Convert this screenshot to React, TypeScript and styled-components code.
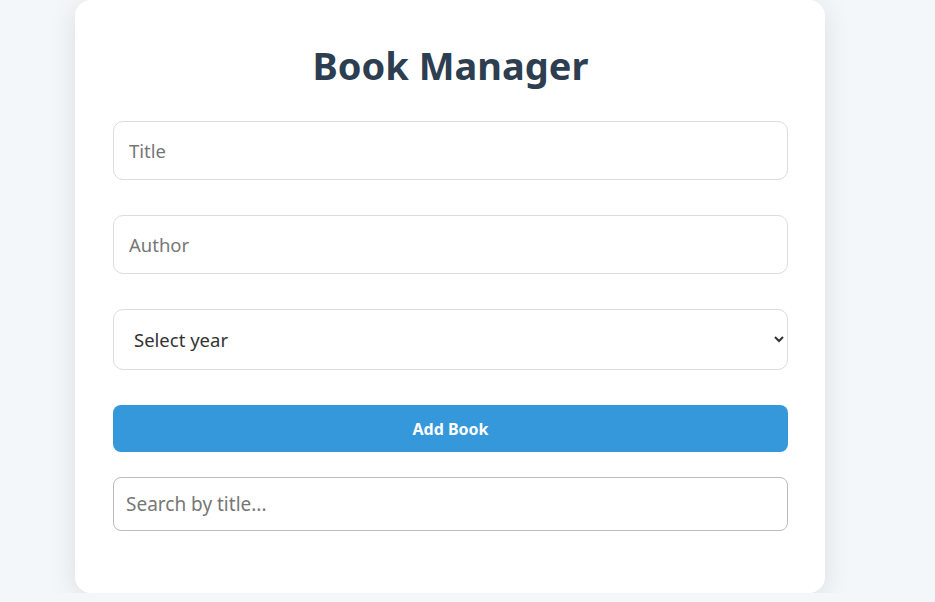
import React from "react";
import styled, { createGlobalStyle } from "styled-components";

const Global = createGlobalStyle`
  html, body { margin: 0; padding: 0; }
  body {
    background: #f4f7fa;
    font-family: "Noto Sans", "Open Sans", sans-serif;
  }
  * { box-sizing: border-box; }
`;

const Page = styled.div`
  display: flex;
  justify-content: flex-start;
  padding-left: 75px;
`;

const Card = styled.div`
  width: 750px;
  background: #fff;
  border-radius: 16px;
  box-shadow: 0 5px 28px rgba(0, 0, 0, 0.1);
  padding: 38px 37px 62px 38px;
  display: flex;
  flex-direction: column;
`;

const Heading = styled.h1`
  margin: 2px 0 31px;
  text-align: center;
  color: #2c3e50;
  font-size: 38px;
  font-weight: 700;
  line-height: 50px;
`;

const Form = styled.form`
  display: flex;
  flex-direction: column;
  gap: 35px;
  margin-bottom: 25px;
`;

const TextInput = styled.input`
  width: 100%;
  height: 59px;
  padding: 0 15px;
  border: 1px solid #ddd;
  border-radius: 10px;
  font-family: inherit;
  font-size: 18.5px;
  color: #333;
  background: #fff;
  outline: none;
  &::placeholder { color: #777; }
`;

const Select = styled.select`
  width: 100%;
  height: 61px;
  padding: 0 16px;
  border: 1px solid #ddd;
  border-radius: 10px;
  font-family: inherit;
  font-size: 18.5px;
  color: #333;
  background: #fff;
  outline: none;
`;

const Button = styled.button`
  width: 100%;
  height: 47px;
  border: none;
  border-radius: 8px;
  background: #3498db;
  color: #fff;
  font-family: inherit;
  font-weight: 700;
  font-size: 16px;
  cursor: pointer;
`;

const Search = styled.input`
  width: 100%;
  height: 54px;
  padding: 0 12px;
  border: 1px solid #bbb;
  border-radius: 8px;
  font-family: inherit;
  font-size: 19px;
  color: #333;
  outline: none;
  &::placeholder { color: #777; }
`;

export default function App() {
  return (
    <>
      <Global />
      <Page>
        <Card>
          <Heading>Book Manager</Heading>
          <Form onSubmit={(e) => e.preventDefault()}>
            <TextInput placeholder="Title" />
            <TextInput placeholder="Author" />
            <Select defaultValue="">
              <option value="">Select year</option>
              <option value="2024">2024</option>
              <option value="2023">2023</option>
            </Select>
            <Button type="submit">Add Book</Button>
          </Form>
          <Search placeholder="Search by title..." />
        </Card>
      </Page>
    </>
  );
}
